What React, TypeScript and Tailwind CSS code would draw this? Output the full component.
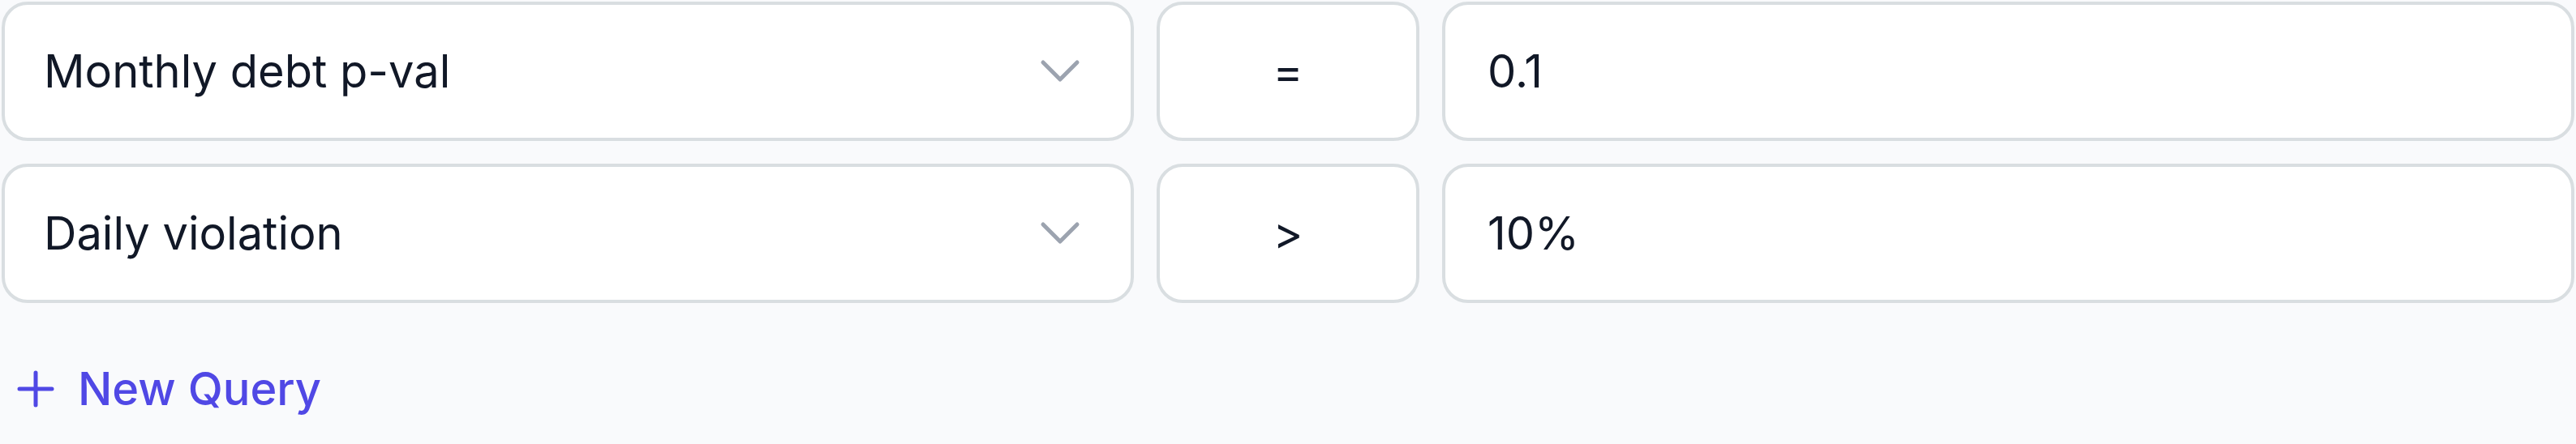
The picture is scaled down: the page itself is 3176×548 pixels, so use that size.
import { useState } from 'react'

type Query = { field: string; op: string; value: string }

function Chevron() {
  return (
    <svg width="50" height="30" viewBox="0 0 50 30" fill="none" className="shrink-0">
      <path d="M4 4l21 21 21-21" stroke="#9ca3af" strokeWidth={5} strokeLinecap="round" strokeLinejoin="round" />
    </svg>
  )
}

export default function App() {
  const [queries] = useState<Query[]>([
    { field: 'Monthly debt p-val', op: '=', value: '0.1' },
    { field: 'Daily violation', op: '>', value: '10%' },
  ])

  return (
    <div
      className="w-[3176px] h-[548px] bg-[#f9fafc] p-[2px] flex flex-col"
      style={{ fontFamily: 'Inter, "Noto Sans", sans-serif' }}
    >
      <div className="flex flex-col gap-[28px]">
        {queries.map((q) => (
          <div key={q.field} className="grid grid-cols-[1fr_324px_1fr] gap-[28px] h-[172px]">
            {/* Field select */}
            <div className="min-w-0 flex items-center justify-between bg-white border-[4px] border-[#d9dee1] rounded-[32px] pl-[48px] pr-[62px]">
              <span className="text-[56px] text-[#111827]">{q.field}</span>
              <Chevron />
            </div>

            {/* Operator */}
            <div className="flex items-center justify-center bg-white border-[4px] border-[#d9dee1] rounded-[32px]">
              <span className="text-[56px] text-[#111827]">{q.op}</span>
            </div>

            {/* Value */}
            <div className="min-w-0 flex items-center bg-white border-[4px] border-[#d9dee1] rounded-[32px] pl-[52px]">
              <span className="text-[56px] text-[#111827]">{q.value}</span>
            </div>
          </div>
        ))}
      </div>

      <button className="mt-[78px] ml-[18px] flex items-center gap-[28px] text-[#5048e5] self-start">
        <svg width="48" height="48" viewBox="0 0 48 48" fill="none">
          <path d="M24 4v40M4 24h40" stroke="currentColor" strokeWidth={5} strokeLinecap="round" />
        </svg>
        <span className="text-[56px] font-medium leading-none">New Query</span>
      </button>
    </div>
  )
}
